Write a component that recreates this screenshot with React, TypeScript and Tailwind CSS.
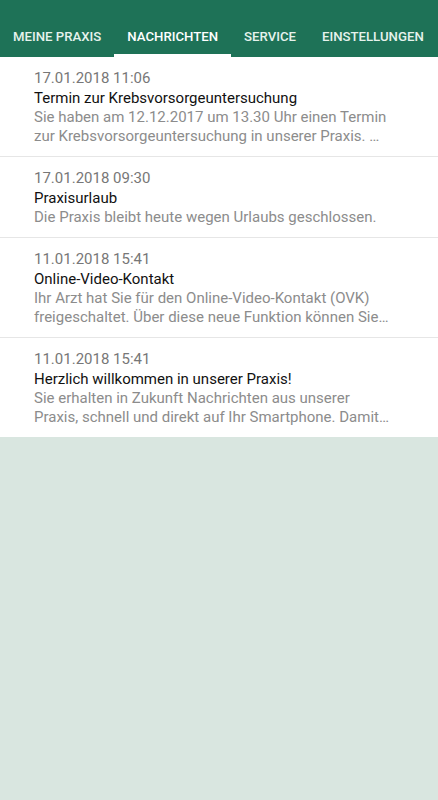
import React from 'react'

const tabs = ['Meine Praxis', 'Nachrichten', 'Service', 'Einstellungen']

const messages = [
  {
    date: '17.01.2018 11:06',
    title: 'Termin zur Krebsvorsorgeuntersuchung',
    body: 'Sie haben am 12.12.2017 um 13.30 Uhr einen Termin zur Krebsvorsorgeuntersuchung in unserer Praxis. …',
  },
  {
    date: '17.01.2018 09:30',
    title: 'Praxisurlaub',
    body: 'Die Praxis bleibt heute wegen Urlaubs geschlossen.',
  },
  {
    date: '11.01.2018 15:41',
    title: 'Online-Video-Kontakt',
    body: 'Ihr Arzt hat Sie für den Online-Video-Kontakt (OVK) freigeschaltet. Über diese neue Funktion können Sie…',
  },
  {
    date: '11.01.2018 15:41',
    title: 'Herzlich willkommen in unserer Praxis!',
    body: 'Sie erhalten in Zukunft Nachrichten aus unserer Praxis, schnell und direkt auf Ihr Smartphone. Damit…',
  },
]

export default function App() {
  return (
    <div className="min-h-screen bg-[#d9e6e0] flex flex-col font-['Roboto',sans-serif]">
      {/* Header with tabs */}
      <header className="bg-[#1e7257] h-[57px] flex items-end shadow-[0_1px_2px_rgba(0,0,0,0.15)] overflow-hidden">
        <nav className="flex w-full whitespace-nowrap">
          {tabs.map((tab, i) => (
            <div
              key={tab}
              className={`relative h-[40px] px-[13px] flex items-center text-[13.2px] font-medium uppercase ${
                i === 1 ? 'text-white' : 'text-[#e6f2ed]'
              }`}
            >
              {tab}
              {i === 1 && <span className="absolute left-0 right-0 bottom-0 h-[3px] bg-white" />}
            </div>
          ))}
        </nav>
      </header>

      {/* Message list */}
      <main className="bg-white">
        {messages.map((m, i) => (
          <div
            key={i}
            className={`pl-[34px] pr-[46px] pt-[11px] pb-[10px] ${
              i < messages.length - 1 ? 'border-b border-[#e6e6e6]' : ''
            }`}
          >
            <div className="text-[15px] leading-[20px] text-[#777777]">{m.date}</div>
            <div className="text-[15px] leading-[20px] text-[#111111]">{m.title}</div>
            <div className="text-[15px] leading-[19px] text-[#8c8c8c]">{m.body}</div>
          </div>
        ))}
      </main>
    </div>
  )
}
